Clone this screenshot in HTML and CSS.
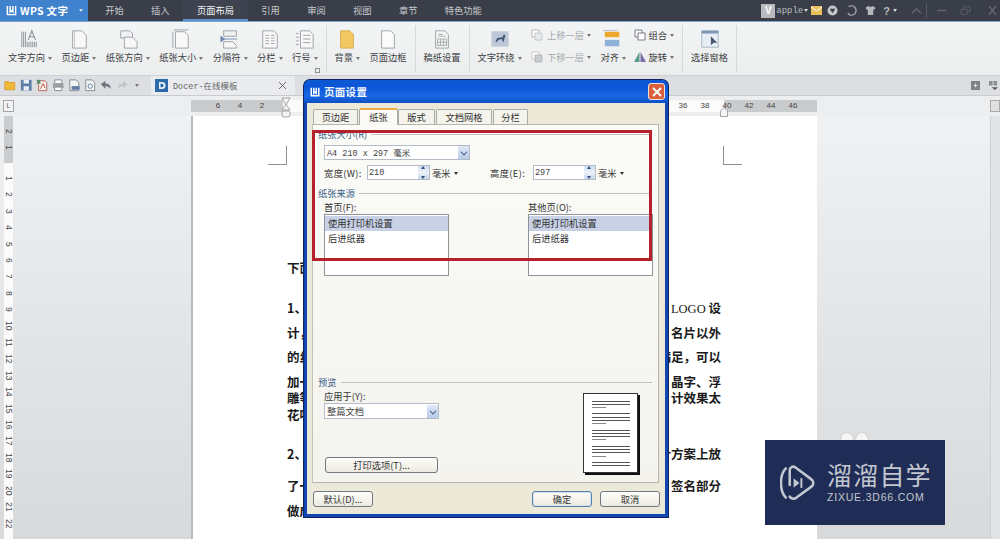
FILE: index.html
```html
<!DOCTYPE html>
<html lang="zh">
<head>
<meta charset="utf-8">
<title>WPS 文字 页面设置</title>
<link rel="stylesheet" href="styles.css">
</head>
<body>
<div class="app">
  <header class="titlebar">
    <div class="brand">
      <svg class="brand-w" viewBox="0 0 12 12"><path d="M1.500 1v9.500h9V1M4.500 1v6.500L6 6l1.500 1.500V1" fill="none" stroke="#fff" stroke-width="1.600"/></svg>
      <span class="brand-name">WPS 文字</span><i class="caret light"></i>
    </div>
    <nav class="tabs">
      <span>开始</span><span>插入</span><span class="on">页面布局</span><span>引用</span><span>审阅</span><span>视图</span><span>章节</span><span>特色功能</span>
    </nav>
    <div class="sys">
      <b class="badge">V</b><span class="user">apple</span><i class="caret light"></i>
      <svg class="sys-i mail" viewBox="0 0 11 9"><rect width="11" height="9" fill="#e8c05c"/><path d="M0 1l5.500 4L11 1" fill="none" stroke="#fff"/></svg>
      <svg class="sys-i" viewBox="0 0 12 12"><circle cx="6" cy="6" r="5.500" fill="#c3c5c9"/><path d="M3 4h6L6 9z" fill="#3b3f4a"/></svg>
      <svg class="sys-i" viewBox="0 0 12 12"><path d="M3 2a5 5 0 1 1-1 7" fill="none" stroke="#a5a8ad" stroke-width="1.400"/></svg>
      <svg class="sys-i" viewBox="0 0 12 12"><path d="M3.500 1L0.500 3l1.500 2.500 1-.5V11h6V5l1 .5L11.500 3l-3-2-1.200 1H4.700z" fill="#b4b6ba"/></svg>
      <span class="help">?</span><i class="caret light"></i>
      <svg class="sys-w up" viewBox="0 0 12 8"><path d="M1 7l5-5 5 5" fill="none" stroke="#646873" stroke-width="1.500"/></svg>
      <i class="sys-sep"></i>
      <svg class="sys-w" viewBox="0 0 12 8"><path d="M1 4h10" stroke="#646873" stroke-width="1.500"/></svg>
      <svg class="sys-w" viewBox="0 0 12 8"><path d="M1 3h7v5H1zM4 3V0h7v5H8" fill="none" stroke="#5a5e69"/></svg>
      <svg class="sys-w last" viewBox="0 0 12 10"><path d="M2 0l8 10M10 0L2 10" stroke="#646873" stroke-width="1.500"/></svg>
    </div>
  </header>

  <section class="ribbon">
    <div class="group">
      <div class="big"><svg viewBox="0 0 22 22"><path d="M2 3v17M4 3v17M6 3v17M8 14v6M10 14v6M12 14v6M14 14v6M16 14v6M18 14v6" stroke="#8b8f96" fill="none"/><path d="M9 12l4-10 4 10M10.500 8.500h5" stroke="#8b8f96" stroke-width="1.200" fill="none"/></svg><span>文字方向<i class="caret"></i></span></div>
      <div class="big"><svg viewBox="0 0 22 22"><path d="M4 2h10l5 5v14H4z" fill="#f8f8f8" stroke="#9a9ea4"/><path d="M6 2v19" stroke="#c2c4c8"/></svg><span>页边距<i class="caret"></i></span></div>
      <div class="big"><svg viewBox="0 0 22 22"><path d="M3 2h10l3 3v5H3z" fill="#eef0f2" stroke="#9a9ea4"/><path d="M7 9h9l5 5v7H7z" fill="#f8f8f8" stroke="#9a9ea4"/></svg><span>纸张方向<i class="caret"></i></span></div>
      <div class="big"><svg viewBox="0 0 22 22"><path d="M3 1h16M2 3v18" stroke="#9a9ea4"/><path d="M5 3h10l4 4v14H5z" fill="#f8f8f8" stroke="#9a9ea4"/></svg><span>纸张大小<i class="caret"></i></span></div>
      <div class="big"><svg viewBox="0 0 22 22"><path d="M4 2h14v6H4z" fill="#eef0f2" stroke="#9a9ea4"/><path d="M4 14h10l4 4v3H4z" fill="#f8f8f8" stroke="#9a9ea4"/><path d="M1 8v6l4-3zM4 11h15" fill="#6f8cb2" stroke="#6f8cb2"/></svg><span>分隔符<i class="caret"></i></span></div>
      <div class="big"><svg viewBox="0 0 22 22"><path d="M3 2h12l4 4v15H3z" fill="#f8f8f8" stroke="#9a9ea4"/><path d="M6 7h4M6 10h4M6 13h4M6 16h4M12 7h4M12 10h4M12 13h4M12 16h4" stroke="#9a9ea4"/></svg><span>分栏<i class="caret"></i></span></div>
      <div class="big"><svg viewBox="0 0 22 22"><path d="M6 2h10l4 4v15H6z" fill="#f8f8f8" stroke="#9a9ea4"/><path d="M9 7h8M9 11h8M9 15h8M1 5h3M1 9h3M1 13h3M1 17h3" stroke="#9a9ea4"/></svg><span>行号<i class="caret"></i></span></div>
      <i class="launcher"></i>
    </div>
    <div class="group">
      <div class="big"><svg viewBox="0 0 22 22"><path d="M4 2h10l4 4v15H4z" fill="#f2c863" stroke="#d9a94a"/></svg><span>背景<i class="caret"></i></span></div>
      <div class="big"><svg viewBox="0 0 22 22"><path d="M4 2h10l4 4v15H4z" fill="#fbfbfb" stroke="#9a9ea4"/></svg><span>页面边框</span></div>
    </div>
    <div class="group">
      <div class="big"><svg viewBox="0 0 22 22"><path d="M4 2h10l4 4v15H4z" fill="#f4f5f5" stroke="#9a9ea4"/><path d="M6 11h10v7H6zM6 14.500h10M9.300 11v7M12.600 11v7M7 6h5M7 8h8" stroke="#a5aaa8" fill="none"/></svg><span>稿纸设置</span></div>
    </div>
    <div class="group">
      <div class="big"><svg viewBox="0 0 22 22"><rect x="2" y="3" width="18" height="16" fill="#bcc8d8" stroke="#c6d0dc"/><path d="M6 14l2-4 6-1 1-3 2 1-1 3-1 4h-1l-1-3-4 1-1 2z" fill="#3f5673"/></svg><span>文字环绕<i class="caret"></i></span></div>
      <div class="stack muted">
        <div class="small"><svg viewBox="0 0 12 12"><path d="M1 1h7v7H1z" fill="#fff" stroke="#b4b6ba"/><path d="M4 4h7v7H4z" fill="#e7e8ea" stroke="#c6c8cb"/></svg><span>上移一层</span><i class="caret"></i></div>
        <div class="small"><svg viewBox="0 0 12 12"><path d="M1 1h7v7H1z" fill="#fff" stroke="#c6c8cb"/><path d="M4 4h7v7H4z" fill="#c9cbcf" stroke="#b4b6ba"/></svg><span>下移一层</span><i class="caret"></i></div>
      </div>
      <div class="big align"><svg viewBox="0 0 22 22"><rect x="0" y="1" width="16" height="1" fill="#aebbd0"/><rect x="2" y="3" width="16" height="6" fill="#efa92f"/><rect x="2" y="12" width="16" height="7" fill="#8fb0d8"/></svg><span>对齐<i class="caret"></i></span></div>
      <div class="stack tight-stack">
        <div class="small"><svg viewBox="0 0 12 12"><path d="M1 1h7v7H1z" fill="#fff" stroke="#777b82"/><path d="M4 4h7v7H4z" fill="#fff" stroke="#777b82"/></svg><span>组合</span><i class="caret"></i></div>
        <div class="small"><svg viewBox="0 0 12 12"><path d="M5.500 1v10H0z" fill="#5a9a8a"/><path d="M6.500 1v10H12z" fill="#7a6fa8"/></svg><span>旋转</span><i class="caret"></i></div>
      </div>
    </div>
    <div class="group">
      <div class="big"><svg viewBox="0 0 22 22"><rect x="2" y="2" width="18" height="18" fill="#e9eef4" stroke="#9fb0c4"/><rect x="2" y="2" width="18" height="3" fill="#7f96b5"/><path d="M12 8v10l3-3h4z" fill="#46586f"/></svg><span>选择窗格</span></div>
    </div>
  </section>

  <section class="quick">
    <div class="qicons">
      <svg viewBox="0 0 14 14"><path d="M1 3h4l1 1h6v8H1z" fill="#efb838" stroke="#d99b20"/></svg>
      <svg viewBox="0 0 14 14"><path d="M1 1h12v12H1z" fill="#5e7da7"/><path d="M4 1h6v4H4zM4 8h6v5H4z" fill="#e8edf3"/></svg>
      <svg viewBox="0 0 14 14"><path d="M3 2h7l2 2v9H3z" fill="#f8f3ee" stroke="#b45a50"/><path d="M1 1l4 4M5 1L1 5" stroke="#3b8a58" stroke-width="1.500"/><path d="M5 11l3-6 2 5" stroke="#c04035" fill="none"/></svg>
      <svg viewBox="0 0 14 14"><path d="M3 1h8v4H3z" fill="#fff" stroke="#80858c"/><path d="M1 5h12v5H1z" fill="#9da2a9"/><path d="M3 9h8v4H3z" fill="#fff" stroke="#80858c"/></svg>
      <svg viewBox="0 0 14 14"><path d="M2 1h7l3 3v9H2z" fill="#f4f5f6" stroke="#80858c"/><path d="M4 8h9v4H4z" fill="#5e7da7"/></svg>
      <svg viewBox="0 0 14 14"><path d="M2 1h7l3 3v9H2z" fill="#f4f5f6" stroke="#80858c"/><circle cx="7" cy="8" r="2.500" fill="none" stroke="#5e7da7"/></svg>
      <svg viewBox="0 0 14 14"><path d="M1 6l5-4v3c4 0 6 2 6 6-2-2-3-3-6-3v3z" fill="#70757d"/></svg>
      <svg viewBox="0 0 14 14"><path d="M13 6L8 2v3C4 5 2 7 2 11c2-2 3-3 6-3v3z" fill="#c3c5c8"/></svg>
      <i class="caret"></i>
    </div>
    <div class="doc-tab">
      <svg class="doc-d" viewBox="0 0 13 13"><rect width="13" height="13" fill="#2c6aa8"/><path d="M4 3h3a3.500 3.500 0 0 1 0 7H4z" fill="#e8eef5"/><path d="M5.500 4.800h1.300a1.700 1.700 0 0 1 0 3.400H5.500z" fill="#2c6aa8"/></svg>
      <span class="doc-name">Docer-在线模板</span>
      <svg class="doc-x" viewBox="0 0 8 8"><path d="M0 0l8 8M8 0L0 8" stroke="#555" stroke-width="1"/></svg>
    </div>
    <div class="qright">
      <svg viewBox="0 0 10 10"><rect width="10" height="10" fill="#7f8388"/><path d="M3 5h4M5 3v4" stroke="#eee"/></svg>
      <svg viewBox="0 0 10 10"><path d="M0 0h4v5H0zM5 0h4v5H5z" fill="#8a8e93"/><path d="M3 7h7l-3.500 3z" fill="#555"/></svg>
    </div>
  </section>

  <section class="hruler-row">
    <div class="corner">L</div>
    <div class="hruler">
      <div class="seg grey left-seg"><span>6</span><span>4</span><span>2</span></div>
      <div class="seg white mid-seg"><span>36</span><span>38</span></div>
      <div class="seg grey right-seg"><span>40</span><span>42</span><span>44</span><span>46</span></div>
      <svg class="marker hourglass" viewBox="0 0 10 21"><path d="M1 1h8L5.500 7v1L9 13H1l3.500-5V7z" fill="#f4f4f4" stroke="#8f9092" stroke-width=".8"/><rect x="1" y="14" width="8" height="6" rx="2" fill="#f4f4f4" stroke="#8f9092" stroke-width=".8"/></svg>
      <svg class="marker house" viewBox="0 0 8 10"><path d="M.5 9.500V4L4 .5 7.500 4v5.500z" fill="#f4f4f4" stroke="#8f9092" stroke-width=".8"/></svg>
    </div>
    <div class="r-corner"></div>
  </section>

  <main class="workspace">
    <aside class="vruler">
      <div class="vgrey"><span>2</span><span>1</span></div>
      <div class="vwhite"><span>1</span><span>2</span><span>3</span><span>4</span><span>5</span><span>6</span><span>7</span><span>8</span><span>9</span><span>10</span><span>11</span><span>12</span><span>13</span><span>14</span><span>15</span><span>16</span><span>17</span><span>18</span><span>19</span><span>20</span><span>21</span><span>22</span></div>
    </aside>
    <article class="page">
      <div class="crops"><i class="crop crop-l"></i><i class="crop crop-r"></i></div>
      <div class="doc">
        <p class="line first"><span>下面</span></p>
        <p class="line para"><span>1、</span><span class="rt">了 <em>LOGO</em> 设</span></p>
        <p class="line"><span>计，</span><span>名片以外</span></p>
        <p class="line"><span>的丝</span><span>满足，可以</span></p>
        <p class="line"><span>加一</span><span>晶字、浮</span></p>
        <p class="line tight"><span>雕等</span><span>计效果太</span></p>
        <p class="line tight"><span>花哨</span></p>
        <p class="line para2"><span>2、</span><span>计方案上放</span></p>
        <p class="line mid"><span>了一</span><span>签名部分</span></p>
        <p class="line end"><span>做成</span></p>
      </div>
    </article>
    <aside class="vscroll"></aside>
  </main>
</div>

<div class="bubbles"><i></i><i></i></div>

<div class="dialog">
  <div class="dlg-title">
    <svg class="dlg-w" viewBox="0 0 12 12"><path d="M1.500 1v9.500h9V1M4.500 1v6.500L6 6l1.500 1.500V1" fill="none" stroke="#fff" stroke-width="1.800"/></svg>
    <span>页面设置</span>
    <div class="dlg-close"><svg viewBox="0 0 10 10"><path d="M1 1l8 8M9 1L1 9" stroke="#fff" stroke-width="2"/></svg></div>
  </div>
  <div class="dlg-tabs">
    <span class="dtab w46">页边距</span><span class="dtab active">纸张</span><span class="dtab w37">版式</span><span class="dtab w56">文档网格</span><span class="dtab w35">分栏</span>
  </div>
  <div class="panel">
    <div class="legend"><span>纸张大小(R)</span><i></i></div>
    <div class="combo wide"><span>A4 210 x 297 毫米</span><b class="drop"></b></div>
    <div class="dims">
      <div class="dim"><label>宽度(W):</label><div class="spin"><span>210</span><b class="spinb"></b></div><span class="unit">毫米<i class="caret dark"></i></span></div>
      <div class="dim"><label>高度(E):</label><div class="spin"><span>297</span><b class="spinb"></b></div><span class="unit">毫米<i class="caret dark"></i></span></div>
    </div>
    <div class="legend second"><span>纸张来源</span><i></i></div>
    <div class="sources">
      <div class="source">
        <label>首页(F):</label>
        <div class="list"><div class="opt sel">使用打印机设置</div><div class="opt">后进纸器</div></div>
      </div>
      <div class="source">
        <label>其他页(O):</label>
        <div class="list"><div class="opt sel">使用打印机设置</div><div class="opt">后进纸器</div></div>
      </div>
    </div>
    <div class="legend third"><span>预览</span><i></i></div>
    <div class="preview">
      <div class="pv-left">
        <label>应用于(Y):</label>
        <div class="combo apply"><span>整篇文档</span><b class="drop"></b></div>
        <button class="btn print">打印选项(T)...</button>
      </div>
      <div class="pv-page">
        <i></i><i></i><i class="s"></i><i class="gap"></i><i></i><i></i><i></i><i class="s"></i><i class="gap"></i><i></i><i></i><i></i><i class="s"></i><i class="gap"></i><i></i><i></i><i></i><i class="s"></i><i class="gap"></i><i></i><i></i>
      </div>
    </div>
  </div>
  <div class="dlg-foot">
    <button class="btn def">默认(D)...</button>
    <button class="btn ok primary">确定</button>
    <button class="btn ok">取消</button>
  </div>
  <div class="redbox"></div>
</div>

<div class="mark">
  <svg class="mark-logo" viewBox="0 0 36 40"><path d="M6 5C2 9 1 14 1 20s1 11 5 15" fill="none" stroke="#c3c7cf" stroke-width="2.600" stroke-linecap="round"/><path d="M10 22V7c0-3 3-5 6-3l16 12c3 2 3 6 0 8L17 35c-3 2-6 1-7-1" fill="none" stroke="#c3c7cf" stroke-width="2.600" stroke-linecap="round"/><path d="M14 15l6 5-6 5z" fill="#c3c7cf"/><rect x="21" y="15" width="2" height="10" fill="#c3c7cf"/></svg>
  <div class="mark-text">
    <div class="mark-cn">溜溜自学</div>
    <div class="mark-en">ZIXUE.3D66.COM</div>
  </div>
</div>
</body>
</html>
```
FILE: styles.css
```css
* { box-sizing: border-box; }
html, body { margin: 0; padding: 0; }
body {
  width: 1000px; height: 539px; overflow: hidden; position: relative;
  font-family: "Noto Sans CJK SC", "Noto Sans", sans-serif;
  font-size: 9.25px; color: #3c3f44; background: #e0e1e3;
}
i { display: block; font-style: normal; }
label { display: block; }
.app { display: flex; flex-direction: column; height: 539px; }

.caret { display: inline-block; width: 0; height: 0; margin-left: 3px; border: 2px solid transparent; border-top: 3px solid #777; border-bottom: 0; vertical-align: middle; }
.caret.light { border-top-color: #d5d7da; }
.caret.dark { border-top-color: #333; }

/* title bar */
.titlebar { height: 22px; flex: none; display: flex; align-items: stretch; background: #3a3e49; border-bottom: 1px solid #7fa4cc; color: #c6c8cc; }
.brand { width: 88px; display: flex; align-items: center; padding-left: 6px; background: #3f82ce; color: #fff; }
.brand-w { width: 11px; height: 11px; margin-right: 3px; }
.brand-name { font-size: 10.500px; font-weight: 700; letter-spacing: .3px; width: 56px; }
.tabs { display: flex; margin-left: 3.500px; }
.tabs span { padding: 0 13.700px; line-height: 20px; }
.tabs .on { color: #f2f3f4; background: #3f434f; border-bottom: 2px solid #5d92cf; }
.sys { margin-left: auto; display: flex; align-items: center; padding-right: 2px; }
.badge { width: 14px; height: 14px; background: #b9bbbf; color: #fff; font: 700 10px/14px "Liberation Sans", sans-serif; text-align: center; }
.user { font: 9px "Liberation Mono", monospace; margin: 0 -2px 0 1px; color: #b9bbbf; }
.sys-i { width: 11px; height: 11px; margin-left: 8px; flex: none; }
.sys-i.mail { margin: 0 -3px 0 3px; }
.help { font: 700 11px "Liberation Sans", sans-serif; margin-left: 7px; color: #b9bbbf; }
.sys-w { width: 11px; height: 9px; margin-left: 13px; flex: none; }
.sys-w.up { margin-left: 14px; }
.sys-w.last { margin-left: 16px; }
.sys-sep { width: 1px; height: 14px; background: #565a65; margin-left: 4px; margin-right: -4px; }

/* ribbon */
.ribbon { height: 54px; flex: none; display: flex; background: linear-gradient(#f3f4f5, #eceded); border-bottom: 1px solid #cfd1d3; padding: 3px 0 0; }
.group { display: flex; gap: 9.500px; padding: 0 8px; height: 48px; border-right: 1px solid #d8d9db; position: relative; flex: none; }
.big { display: flex; flex-direction: column; align-items: center; white-space: nowrap; }
.big svg { width: 20px; height: 20px; margin-top: 4px; }
.big span { margin-top: 1px; line-height: 14px; }
.stack { display: flex; flex-direction: column; gap: 2px; }
.small { display: flex; align-items: center; height: 20px; }
.small svg { width: 12px; height: 12px; margin-right: 4px; }
.stack.muted { color: #a8aaad; }
.tight-stack { margin-left: -2px; }
.tight-stack .small svg { margin-right: 3px; }
.launcher { position: absolute; right: 6px; bottom: 0; width: 5px; height: 5px; border: 1px solid #8b8f96; }

/* quick bar */
.quick { height: 20px; flex: none; display: flex; align-items: center; background: #dcdee1; border-bottom: 1px solid #c9cbce; }
.qicons { width: 151px; display: flex; align-items: center; gap: 3.500px; padding-left: 4px; }
.qicons svg { width: 12.500px; height: 12.500px; flex: none; }
.doc-tab { width: 144px; height: 19px; display: flex; align-items: center; background: #e9ebee; padding-left: 4px; }
.doc-d { width: 13px; height: 13px; }
.doc-name { font-family: "Liberation Mono", "Noto Sans CJK SC", monospace; font-size: 8.500px; color: #666; margin-left: 5px; }
.doc-x { width: 7px; height: 7px; margin-left: auto; margin-right: 9px; }
.qright { margin-left: auto; display: flex; gap: 9px; padding-right: 2px; }
.qright svg { width: 9px; height: 9px; }

/* rulers */
.hruler-row { height: 20px; flex: none; display: flex; align-items: center; background: #edeeef; }
.corner { width: 11px; height: 12px; margin-left: 3px; border: 1px solid #a4a6a9; background: #f3f3f3; font: 7px/10px "Liberation Sans", sans-serif; text-align: center; color: #666; }
.hruler { display: flex; margin-left: 177px; height: 12px; font: 8px/12px "Liberation Sans", sans-serif; color: #444; position: relative; }
.seg { display: flex; }
.seg span { width: 22px; text-align: center; flex: none; }
.grey { background: #cacbcd; }
.white { background: #fbfbfb; }
.left-seg { width: 92px; padding-left: 16px; }
.mid-seg { width: 441px; justify-content: flex-end; padding-right: 8px; }
.right-seg { width: 93px; }
.right-seg span:first-child { margin-left: -8px; }
.marker { position: absolute; }
.hourglass { left: 90px; top: -3px; width: 10px; height: 21px; }
.house { left: 529px; top: 7px; width: 8px; height: 10px; }
.r-corner { margin-left: auto; width: 10px; height: 12px; background: #dfe0e2; border: 1px solid #aaa; }

/* workspace */
.workspace { flex: 1; display: flex; min-height: 0; overflow: hidden; background: linear-gradient(#f0f1f2, #d8d9db); }
.vruler { width: 9px; margin-left: 4px; flex: none; font: 8.500px/9px "Liberation Sans", sans-serif; color: #444; }
.vgrey { height: 47px; background: #cbccce; display: flex; flex-direction: column; padding-top: 7px; }
.vwhite { background: #fbfbfb; display: flex; flex-direction: column; padding-top: 7px; height: 400px; }
.vruler span { height: 16.450px; flex: none; writing-mode: vertical-rl; text-align: center; width: 9px; }
.page { width: 626px; margin-left: 178px; flex: none; background: #fff; border-left: 2px solid #b9babc; color: #1a1a1a; }
.crops { display: flex; justify-content: space-between; padding: 30px 75px 0 75px; }
.crop { width: 19px; height: 19px; }
.crop-l { border-right: 1px solid #8f9092; border-bottom: 1px solid #8f9092; }
.crop-r { border-left: 1px solid #8f9092; border-bottom: 1px solid #8f9092; }
.doc { padding: 0 96px 0 94px; font-family: "Noto Sans CJK SC", serif; font-size: 12.500px; font-weight: 700; }
.line { margin: 8.500px 0 0; height: 16px; line-height: 16px; display: flex; justify-content: space-between; white-space: nowrap; }
.line.first { margin-top: 95px; }
.line.para { margin-top: 24px; }
.line.tight { margin-top: .5px; }
.line.para2 { margin-top: 23px; }
.line.mid { margin-top: 16px; }
.line.end { margin-top: 9.500px; }
.line em { font-family: "Liberation Serif", serif; font-style: normal; font-variant: small-caps; font-weight: 400; }
.vscroll { margin-left: auto; width: 10px; flex: none; background: #e3e4e6; border-left: 1px solid #cfd0d2; }

.bubbles { position: absolute; left: 840px; top: 432px; display: flex; gap: 1px; }
.bubbles i { width: 14px; height: 16px; border-radius: 50%; background: #f6f6f7; border: 1px solid #d0d1d3; }

/* dialog */
.dialog { position: absolute; left: 304px; top: 80px; width: 364px; height: 437px; border: 3px solid #1246b0; border-top: 0; border-radius: 6px 6px 0 0; background: #ece9d8; box-shadow: 0 0 0 1px #11235f; color: #333; }
.dlg-title { height: 23px; margin: 0 -3px; padding-left: 6px; display: flex; align-items: center; border-radius: 6px 6px 0 0; background: linear-gradient(#0d58d2, #0a55d8 30%, #1a68e6 70%, #0c50c4); color: #f3f6fb; font-size: 10.500px; font-weight: 700; letter-spacing: .3px; }
.dlg-w { width: 10px; height: 10px; margin-right: 4px; }
.dlg-close { margin-left: auto; margin-right: 3px; width: 17px; height: 17px; border: 1px solid #f2e2dc; border-radius: 3px; background: #d9603a; display: flex; align-items: center; justify-content: center; }
.dlg-close svg { width: 10px; height: 10px; }

.dlg-tabs { height: 21px; display: flex; align-items: flex-end; margin-left: 6px; position: relative; }
.dtab { height: 15px; line-height: 14px; text-align: center; background: #f4f3ec; border: 1px solid #a9ada9; border-bottom: 0; border-radius: 2px 2px 0 0; }
.dtab.w46 { width: 45px; }
.dtab.w37 { width: 37px; }
.dtab.w56 { width: 56px; margin-left: 1px; }
.dtab.w35 { width: 35px; margin-left: 1px; }
.dtab.active { width: 39px; height: 17px; background: #fbfaf6; border-top: 2px solid #ecb04a; margin: 0 0 -1px 1px; position: relative; z-index: 1; }

.panel { height: 359px; margin: 0 6px 0 5px; padding: 3px 0 0 5px; border: 1px solid #b4b6ae; border-left-color: #c2c4bc; background: linear-gradient(#fbfbf7, #f4f3ee); }
.legend { height: 12px; line-height: 12px; display: flex; align-items: center; color: #3a5d8a; }
.legend i { flex: 1; height: 1px; background: #c0c1bb; margin: 0 6px 0 4px; }
.combo { height: 15px; display: flex; align-items: center; justify-content: space-between; margin: 5px 0 0 6px; border: 1px solid #b3bcc6; background: #fff; padding-left: 2px; color: #444; }
.combo.wide { width: 146px; font-family: "Liberation Mono", "Noto Sans CJK SC", monospace; font-size: 8.500px; }
.combo.apply { width: 115px; height: 16px; margin: 1px 0 0; }
.drop { width: 11px; height: 13px; background: linear-gradient(#dfe8f6, #b9cbe8); position: relative; }
.drop::after { content: ""; position: absolute; left: 3px; top: 3px; width: 5px; height: 5px; border: solid #30507e; border-width: 0 1.500px 1.500px 0; transform: scale(.8) rotate(45deg); }
.dims { display: flex; margin: 5px 0 0 6px; }
.dim { display: flex; align-items: center; height: 15px; width: 166px; }
.dim label { width: 43px; letter-spacing: .4px; }
.spin { width: 63px; height: 15px; display: flex; align-items: center; justify-content: space-between; border: 1px solid #b3bcc6; background: #fff; padding-left: 1px; font: 8.500px "Liberation Mono", monospace; color: #444; }
.spinb { width: 11px; height: 13px; background: linear-gradient(#cfdcf0, #eef2f9 50%, #c5d4ea); border-radius: 1px; position: relative; }
.spinb::before, .spinb::after { content: ""; position: absolute; left: 3px; border: 2.500px solid transparent; }
.spinb::before { top: 0; border-top: 0; border-bottom: 3px solid #30507e; }
.spinb::after { bottom: 0; border-bottom: 0; border-top: 3px solid #30507e; }
.unit { margin-left: 2px; white-space: nowrap; }
.legend.second { margin-top: 7px; }
.sources { display: flex; margin: 2px 0 0 6px; }
.source { width: 204px; flex: none; }
.source label { height: 13px; line-height: 12px; }
.list { width: 125px; height: 62px; border: 1px solid #8f9296; background: #fff; padding-top: 1px; }
.opt { height: 15px; line-height: 15px; padding-left: 3px; color: #333; }
.opt.sel { background: #c8d1e6; }
.legend.third { margin-top: 100px; }
.preview { display: flex; margin: 2px 0 0 6px; }
.pv-left { width: 259px; flex: none; }
.pv-left label { line-height: 12px; height: 12px; }
.btn { display: block; height: 16px; padding: 0; font: inherit; line-height: 13px; color: #333; text-align: center; background: linear-gradient(#fdfdfb, #eceae0); border: 1px solid #72787f; border-radius: 3px; }
.print { width: 113px; margin: 38px 0 0 1px; }
.pv-page { width: 55px; height: 80px; margin-top: 3px; padding: 6.500px 7px 0 8px; background: #fff; border: 1px solid #333; box-shadow: 2px 2px 0 #111; display: flex; flex-direction: column; gap: 2.300px; flex: none; }
.pv-page i { height: 1px; background: #555; flex: none; }
.pv-page i.s { width: 14px; background: #888; }
.pv-page i.gap { height: .7px; background: none; }
.dlg-foot { display: flex; gap: 8px; padding: 8px 5px 0 6px; }
.def { width: 60px; }
.ok { width: 60px; }
.ok.primary { margin-left: auto; border-color: #5a7fa8; box-shadow: inset 0 0 0 1px #cfe0f2; }
.redbox { position: absolute; left: 5px; top: 50px; width: 340px; height: 131px; border: 3px solid #b5202c; }

/* watermark */
.mark { position: absolute; left: 765px; top: 440px; width: 180px; height: 85px; background: #1f2d56; display: flex; align-items: center; padding-left: 15px; }
.mark-logo { width: 35px; height: 40px; flex: none; }
.mark-text { margin-left: 12px; color: #c3c7cf; }
.mark-cn { font-size: 25px; line-height: 28px; letter-spacing: 1.200px; white-space: nowrap; margin-top: -3px; }
.mark-en { font: 10.500px/12px "Liberation Sans", sans-serif; letter-spacing: .8px; margin-top: 3px; white-space: nowrap; }
```
